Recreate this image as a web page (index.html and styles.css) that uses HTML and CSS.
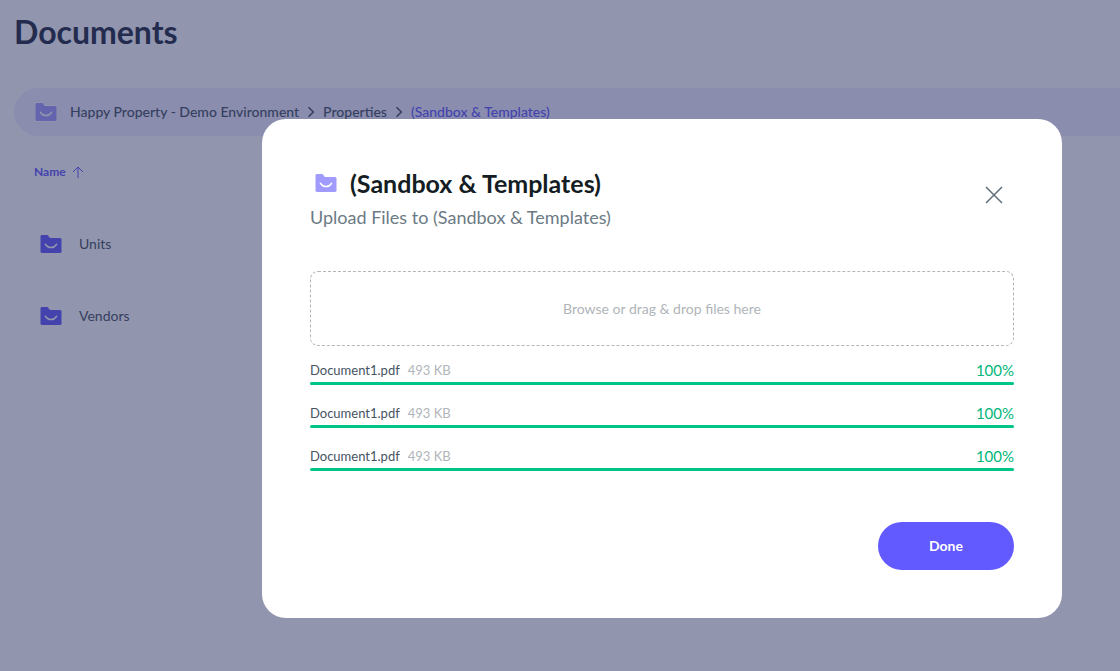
FILE: index.html
```html
<!DOCTYPE html>
<html lang="en">
<head>
<meta charset="utf-8">
<meta name="viewport" content="width=device-width, initial-scale=1">
<title>Documents</title>
<link rel="stylesheet" href="styles.css">
</head>
<body>
<svg class="sprite" aria-hidden="true">
  <symbol id="folder" viewBox="0 0 22 20">
    <path fill="currentColor" d="M2 0.500h5c.7 0 1.200.3 1.500.9L9.800 3.500H20a2 2 0 0 1 2 2v12a2 2 0 0 1-2 2H2a2 2 0 0 1-2-2v-15a2 2 0 0 1 2-2z"/>
    <path fill="none" stroke-width="1.600" stroke-linecap="round" d="M5.500 10.300c2.600 4.300 8.400 4.300 11 0"/>
  </symbol>
  <symbol id="chevron" viewBox="0 0 8 12">
    <path fill="none" stroke="currentColor" stroke-width="1.600" d="M1.500 1.200 6.300 6l-4.800 4.800"/>
  </symbol>
</svg>

<main class="page">
  <h1 class="page-title">Documents</h1>
  <nav class="breadcrumb" aria-label="Breadcrumb">
    <svg class="folder folder-light"><use href="#folder"/></svg>
    <a class="crumb crumb-root" href="#">Happy Property - Demo Environment</a>
    <svg class="chevron"><use href="#chevron"/></svg>
    <a class="crumb" href="#">Properties</a>
    <svg class="chevron"><use href="#chevron"/></svg>
    <a class="crumb crumb-current" href="#" aria-current="page">(Sandbox &amp; Templates)</a>
  </nav>
  <button class="sort" type="button">Name
    <svg class="sort-arrow" viewBox="0 0 12 12"><path fill="none" stroke="currentColor" d="M6 12V1M1 6l5-5 5 5"/></svg>
  </button>
  <ul class="folders">
    <li><a class="folder-row" href="#"><svg class="folder"><use href="#folder"/></svg>Units</a></li>
    <li><a class="folder-row" href="#"><svg class="folder"><use href="#folder"/></svg>Vendors</a></li>
  </ul>
</main>

<div class="overlay">
  <section class="dialog" role="dialog" aria-modal="true" aria-labelledby="dialog-title">
    <header class="dialog-head">
      <div>
        <div class="dialog-heading">
          <svg class="folder folder-light"><use href="#folder"/></svg>
          <h2 class="dialog-title" id="dialog-title">(Sandbox &amp; Templates)</h2>
        </div>
        <p class="dialog-sub">Upload Files to (Sandbox &amp; Templates)</p>
      </div>
      <button class="close" type="button" aria-label="Close">
        <svg class="close-icon" viewBox="0 0 18 18"><path fill="none" stroke="currentColor" stroke-width="1.500" d="m1 1 16 16M17 1 1 17"/></svg>
      </button>
    </header>
    <button class="dropzone" type="button">Browse or drag &amp; drop files here</button>
    <ul class="files">
      <li class="file"><div class="file-info"><span class="file-name">Document1.pdf</span><span class="file-size">493 KB</span><span class="file-percent">100%</span></div><div class="track"><div class="fill" style="width:100%"></div></div></li>
      <li class="file"><div class="file-info"><span class="file-name">Document1.pdf</span><span class="file-size">493 KB</span><span class="file-percent">100%</span></div><div class="track"><div class="fill" style="width:100%"></div></div></li>
      <li class="file"><div class="file-info"><span class="file-name">Document1.pdf</span><span class="file-size">493 KB</span><span class="file-percent">100%</span></div><div class="track"><div class="fill" style="width:100%"></div></div></li>
    </ul>
    <footer class="dialog-foot"><button class="done" type="button">Done</button></footer>
  </section>
</div>
</body>
</html>
```
FILE: styles.css
```css
* { box-sizing: border-box; }

body, h1, h2, p, ul { margin: 0; }

body {
  background: #fff;
  color: #45545f;
  font: 14px/24px Lato, "Open Sans", sans-serif;
}

ul { padding: 0; list-style: none; }
a { color: inherit; text-decoration: none; }
svg { display: block; flex: none; }
button {
  padding: 0;
  border: 0;
  background: none;
  color: inherit;
  font: inherit;
  cursor: pointer;
}

.sprite { position: absolute; width: 0; height: 0; }

.page { padding: 12px 0 24px 14px; }

.page-title {
  color: #212d3f;
  font-size: 32px;
  line-height: 40px;
  font-weight: 700;
}

.breadcrumb {
  display: flex;
  align-items: center;
  gap: 8px;
  min-height: 48px;
  margin-top: 36px;
  padding-left: 21px;
  border-radius: 24px 0 0 24px;
  background: #efefff;
}

.folder { width: 22px; height: 20px; color: #625aff; stroke: #fff; }
.folder-light { color: #a19bff; }
.chevron { width: 8px; height: 12px; }
.crumb { font-weight: 500; white-space: nowrap; }
.crumb-root { margin-left: 5px; }
.crumb-current { color: #625aff; }

.sort {
  display: flex;
  align-items: center;
  gap: 6px;
  margin: 24px 0 0 20px;
  color: #625aff;
  font-size: 12px;
  font-weight: 700;
}
.sort-arrow { width: 12px; height: 12px; }

.folders { margin-top: 24px; padding-left: 26px; }
.folder-row {
  display: flex;
  align-items: center;
  gap: 17px;
  height: 72px;
}

.overlay {
  position: fixed;
  inset: 0;
  display: flex;
  align-items: flex-start;
  justify-content: flex-end;
  overflow: auto;
  padding: 119px 58px 24px;
  background: rgba(37, 43, 93, .5);
}

.dialog {
  width: 100%;
  max-width: 800px;
  padding: 48px;
  border-radius: 24px;
  background: #fff;
}

.dialog-head {
  display: flex;
  align-items: flex-start;
  justify-content: space-between;
}
.dialog-heading {
  display: flex;
  align-items: center;
  gap: 13px;
  padding-left: 5px;
}
.dialog-title {
  color: #141d23;
  font-size: 25px;
  line-height: 32px;
  font-weight: 700;
}
.dialog-sub {
  margin-top: 5px;
  color: #6b7a84;
  font-size: 18px;
  line-height: 26px;
}
.close {
  display: grid;
  place-items: center;
  width: 40px;
  height: 40px;
  margin-top: 8px;
  color: #5f6f7a;
}
.close-icon { width: 18px; height: 18px; }

.dropzone {
  display: block;
  width: 100%;
  height: 75px;
  margin-top: 41px;
  border: 1px dashed #b3b7bb;
  border-radius: 8px;
  color: #b0b5b9;
}

.files {
  display: grid;
  gap: 16px;
  margin-top: 12px;
}
.file-info {
  display: flex;
  align-items: center;
  gap: 8px;
  font-size: 13px;
}
.file-size { color: #b0b5b9; }
.file-percent {
  margin-left: auto;
  color: #00b67a;
  font-size: 15px;
}
.track {
  height: 3px;
  border-radius: 2px;
  background: #e3f7f0;
}
.fill {
  height: 3px;
  border-radius: 2px;
  background: #00c588;
}

.dialog-foot {
  display: flex;
  justify-content: flex-end;
  margin-top: 51px;
}
.done {
  width: 136px;
  height: 48px;
  border-radius: 24px;
  background: #625aff;
  color: #fff;
  font-weight: 700;
}
```
